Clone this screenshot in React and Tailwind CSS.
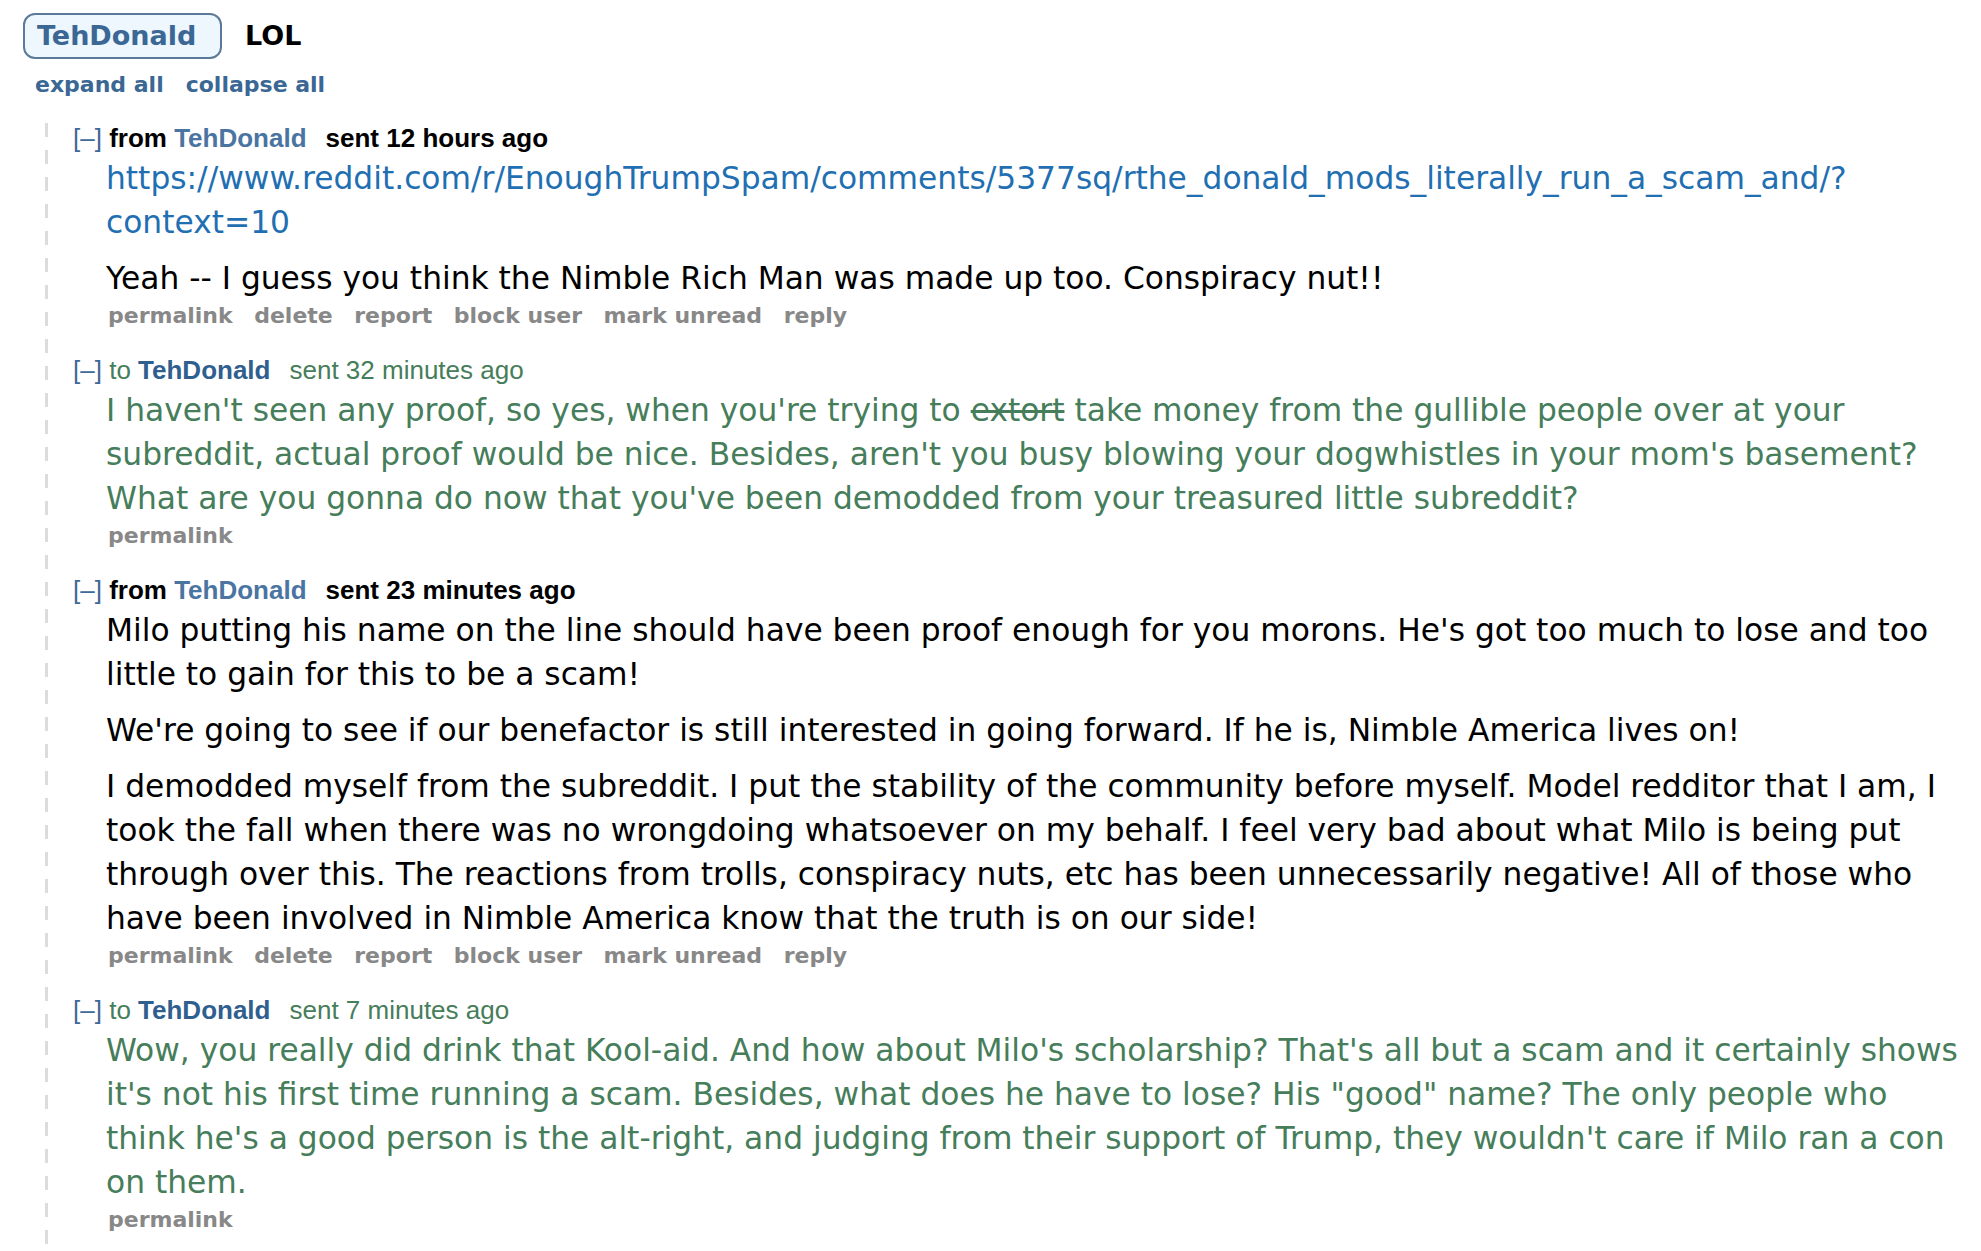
import React from 'react';

const messages = [
  {
    dir: 'from',
    when: 'sent 12 hours ago',
    paras: [
      { link: ['https://www.reddit.com/r/EnoughTrumpSpam/comments/5377sq/rthe_donald_mods_literally_run_a_scam_and/?', 'context=10'] },
      { text: 'Yeah -- I guess you think the Nimble Rich Man was made up too. Conspiracy nut!!' },
    ],
    buttons: ['permalink', 'delete', 'report', 'block user', 'mark unread', 'reply'],
  },
  {
    dir: 'to',
    when: 'sent 32 minutes ago',
    paras: [
      {
        strike: true,
        before: 'I haven\'t seen any proof, so yes, when you\'re trying to ',
        struck: 'extort',
        after:
          ' take money from the gullible people over at your subreddit, actual proof would be nice. Besides, aren\'t you busy blowing your dogwhistles in your mom\'s basement? What are you gonna do now that you\'ve been demodded from your treasured little subreddit?',
      },
    ],
    buttons: ['permalink'],
  },
  {
    dir: 'from',
    when: 'sent 23 minutes ago',
    paras: [
      { text: 'Milo putting his name on the line should have been proof enough for you morons. He\'s got too much to lose and too little to gain for this to be a scam!' },
      { text: 'We\'re going to see if our benefactor is still interested in going forward. If he is, Nimble America lives on!' },
      {
        text: 'I demodded myself from the subreddit. I put the stability of the community before myself. Model redditor that I am, I took the fall when there was no wrongdoing whatsoever on my behalf. I feel very bad about what Milo is being put through over this. The reactions from trolls, conspiracy nuts, etc has been unnecessarily negative! All of those who have been involved in Nimble America know that the truth is on our side!',
      },
    ],
    buttons: ['permalink', 'delete', 'report', 'block user', 'mark unread', 'reply'],
  },
  {
    dir: 'to',
    when: 'sent 7 minutes ago',
    paras: [
      {
        text: 'Wow, you really did drink that Kool-aid. And how about Milo\'s scholarship? That\'s all but a scam and it certainly shows it\'s not his first time running a scam. Besides, what does he have to lose? His "good" name? The only people who think he\'s a good person is the alt-right, and judging from their support of Trump, they wouldn\'t care if Milo ran a con on them.',
      },
    ],
    buttons: ['permalink'],
  },
];

function Header({ m }) {
  const mine = m.dir === 'to';
  return (
    <div className="font-['Liberation_Sans',Arial,sans-serif] text-[26px] leading-[30px] whitespace-nowrap">
      <span className="text-[#3d6a96]">[–]</span>{' '}
      {mine ? (
        <>
          <span className="text-[#467d5a]">to </span>
          <span className="font-bold text-[#2f5f8f]">TehDonald</span>
          <span className="ml-[19px] text-[#467d5a]">{m.when}</span>
        </>
      ) : (
        <>
          <span className="font-bold text-black">from </span>
          <span className="font-bold text-[#4a74a1]">TehDonald</span>
          <span className="ml-[19px] font-bold text-black">{m.when}</span>
        </>
      )}
    </div>
  );
}

function Message({ m }) {
  const green = m.dir === 'to';
  return (
    <div className="mb-[24px]">
      <Header m={m} />
      <div className={`mt-[3px] pl-[33px] pr-[12px] text-[31.3px] leading-[44px] space-y-[12px] ${green ? 'text-[#467d5a]' : 'text-black'}`}>
        {m.paras.map((p, i) => (
          <p key={i}>
            {p.link && (
              <a className="text-[#1f6fb2]">
                {p.link[0]}
                <wbr />
                {p.link[1]}
              </a>
            )}
            {p.text}
            {p.strike && (
              <>
                {p.before}
                <span className="line-through">{p.struck}</span>
                {p.after}
              </>
            )}
          </p>
        ))}
      </div>
      <div className="mt-[1px] pl-[35px] flex gap-[21.5px] text-[22px] leading-[30px] font-bold text-[#888]">
        {m.buttons.map((b) => (
          <span key={b}>{b}</span>
        ))}
      </div>
    </div>
  );
}

export default function App() {
  return (
    <div className="min-h-screen bg-white font-['DejaVu_Sans',Verdana,sans-serif] text-black overflow-hidden">
      <div className="pl-[23px] pt-[13px] flex items-center gap-[23px]">
        <div className="w-[199px] h-[46px] pl-[12px] flex items-center rounded-[12px] border-2 border-[#5b7a99] bg-[#eef6fe] text-[27px] font-bold text-[#3a6794]">
          TehDonald
        </div>
        <div className="text-[27px] font-bold">LOL</div>
      </div>
      <div className="pl-[35px] mt-[11px] flex gap-[22px] text-[22px] leading-[30px] font-bold text-[#3a6794]">
        <span>expand all</span>
        <span>collapse all</span>
      </div>
      <div className="mt-[23px] ml-[45px] flex">
        <div className="w-[3px] shrink-0 bg-[repeating-linear-gradient(to_bottom,#dcdcdc_0,#dcdcdc_14px,transparent_14px,transparent_27px)]" />
        <div className="pl-[25px] flex-1 min-w-0">
          {messages.map((m, i) => (
            <Message key={i} m={m} />
          ))}
        </div>
      </div>
    </div>
  );
}
